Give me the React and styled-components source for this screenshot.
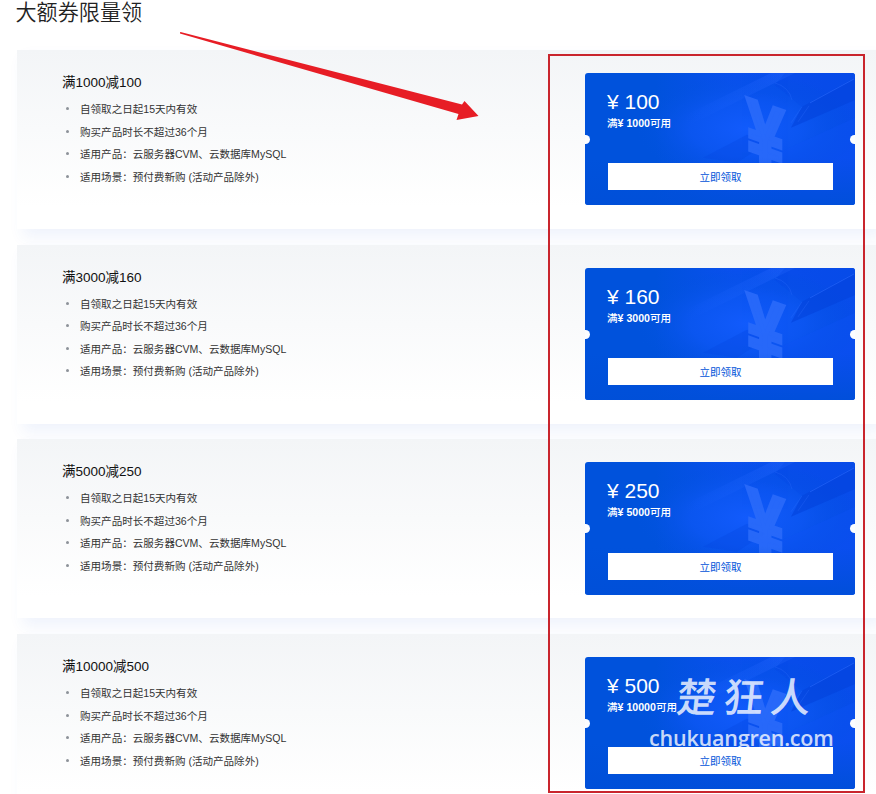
import React from 'react';
import styled, { createGlobalStyle } from "styled-components";

const coupons = [
  { full: 1000, minus: 100 },
  { full: 3000, minus: 160 },
  { full: 5000, minus: 250 },
  { full: 10000, minus: 500 },
];

const rules = [
  "自领取之日起15天内有效",
  "购买产品时长不超过36个月",
  "适用产品：云服务器CVM、云数据库MySQL",
  "适用场景：预付费新购 (活动产品除外)",
];

function CouponArt() {
  return (
    <Art viewBox="0 0 270 133" preserveAspectRatio="none" aria-hidden="true">
      <defs>
        <radialGradient id="glow" cx="0.6" cy="0.42" r="0.42">
          <stop offset="0" stopColor="#125bfc" />
          <stop offset="0.5" stopColor="#0c57f2" stopOpacity="0.8" />
          <stop offset="1" stopColor="#0052dc" stopOpacity="0" />
        </radialGradient>
        <linearGradient id="beam" gradientUnits="userSpaceOnUse" x1="100" y1="48" x2="200" y2="0">
          <stop offset="0" stopColor="#1a62ff" stopOpacity="0" />
          <stop offset="1" stopColor="#2a6cff" stopOpacity="0.35" />
        </linearGradient>
        <linearGradient id="side" x1="0" y1="0" x2="1" y2="0">
          <stop offset="0" stopColor="#0a50ee" stopOpacity="0" />
          <stop offset="0.4" stopColor="#0a50ee" />
          <stop offset="1" stopColor="#084cea" />
        </linearGradient>
        <linearGradient id="shade" x1="0" y1="0" x2="0" y2="1">
          <stop offset="0" stopColor="#004fd8" stopOpacity="0" />
          <stop offset="1" stopColor="#004fd8" stopOpacity="0.9" />
        </linearGradient>
      </defs>
      <rect x="70" width="200" height="133" fill="url(#side)" />
      <rect width="270" height="133" fill="url(#glow)" />
      <path d="M85 50 L186 0 H210 L105 52Z" fill="url(#beam)" />
      <path d="M200 0 H270 V5 L217 34 L190 12Z" fill="#0648e4" opacity="0.3" />
      <path d="M217 34 L270 5 V27 L206 55Z" fill="#0343dc" opacity="0.6" />
      <path d="M225 30 L269 6" stroke="#2c6cff" strokeWidth="0.8" opacity="0.7" />
      <path d="M190 10 Q204 14 207 27 M217 34 L206 50 M224 33 L213 49" stroke="#3472ff" strokeWidth="0.7" fill="none" opacity="0.4" />
      <path d="M118 85 L162 62 L180 72 L152 90Z" fill="#0749e2" opacity="0.35" />
      <path d="M185 84 L270 45 V133 H185Z" fill="#0d54f5" opacity="0.35" />
      <text transform="matrix(1.06 .38 0 1.42 162 86)" fontFamily="Liberation Sans" fontWeight="700" fontSize="62" fill="#2b6bfa" stroke="#2b6bfa" strokeWidth="3.500" opacity="0.9">¥</text>
      <rect y="85" width="270" height="48" fill="url(#shade)" />
    </Art>
  );
}

function Coupon({ full, minus }) {
  return (
    <Ticket>
      <CouponArt />
      <Price>¥ {minus}</Price>
      <Limit><span>满</span>¥ {full}<span>可用</span></Limit>
      <Receive>立即领取</Receive>
      <Notch />
      <Notch $right />
    </Ticket>
  );
}

export default function App() {
  return (
    <Page>
      <GlobalStyle />
      <Heading>大额券限量领</Heading>
      <List>
        {coupons.map((c) => (
          <Card key={c.full}>
            <Info>
              <h3>满{c.full}减{c.minus}</h3>
              <ul>
                {rules.map((rule) => <li key={rule}>{rule}</li>)}
              </ul>
            </Info>
            <Coupon {...c} />
          </Card>
        ))}
      </List>
      <Watermark>
        <div className="name"><span>楚</span><span>狂</span><span>人</span></div>
        <div className="site">chukuangren.com</div>
      </Watermark>
      <Frame />
      <Arrow viewBox="0 0 300 90">
        <path d="M0 .5 L.5 0 L282 72.5 L284.500 69 L298.500 84 L276.500 88 L278.500 82 L0 1.500Z" fill="#e71d25" />
      </Arrow>
    </Page>
  );
}

const GlobalStyle = createGlobalStyle`
    * {
        box-sizing: border-box;
        margin: 0;
        padding: 0;
    }
    body {
        background: #fff;
        overflow: hidden;
        font-family: "Liberation Sans", "Noto Sans CJK SC", sans-serif;
    }
`;

const Page = styled.div`
    position: relative;
    width: 876px;
    height: 794px;
    overflow: hidden;
`;

const Heading = styled.h1`
    height: 50px;
    padding-left: 15.500px;
    font-size: 21.1px;
    line-height: 25px;
    font-weight: 350;
    color: #222;
`;

const List = styled.div`
    display: flex;
    flex-direction: column;
    gap: 15.700px;
    padding-left: 17px;
`;

const Card = styled.section`
    display: flex;
    flex: none;
    justify-content: space-between;
    align-items: flex-start;
    height: 179px;
    padding: 22.900px 21px 0 45px;
    background: linear-gradient(#f3f5f7, #fff 88%);
    box-shadow: 6px 8px 14px rgba(55, 99, 220, 0.08);
`;

const Info = styled.div`
    color: #111;
    h3 {
        font-size: 13.5px;
        line-height: 19px;
        font-weight: 400;
    }
    ul {
        margin-top: 5.400px;
        list-style: none;
    }
    li {
        display: flex;
        align-items: center;
        height: 22.5px;
        font-size: 10.55px;
        white-space: pre;
        color: #333;
    }
    li::before {
        content: "";
        width: 3px;
        height: 3px;
        margin: 0 11px 0 4px;
        border-radius: 50%;
        background: #8d9299;
    }
`;

const Ticket = styled.div`
    position: relative;
    width: 270px;
    height: 132.500px;
    padding: 17px 22px 0 23px;
    border-radius: 3px;
    overflow: hidden;
    background: #0052dc;
    color: #fff;
`;

const Art = styled.svg`
    position: absolute;
    inset: 0;
    width: 100%;
    height: 100%;
`;

const Price = styled.div`
    position: relative;
    margin-left: -1px;
    font-size: 21px;
    line-height: 24px;
`;

const Limit = styled.div`
    position: relative;
    height: 18px;
    margin-left: -1px;
    font-size: 10.6px;
    line-height: 18px;
    font-weight: 700;
    span {
        font-weight: 500;
    }
`;

const Receive = styled.button`
    position: relative;
    display: block;
    width: 225px;
    height: 27px;
    margin-top: 31.400px;
    border: 0;
    background: #fff;
    color: #0052d9;
    font-family: inherit;
    font-size: 10.5px;
`;

const Notch = styled.i`
    position: absolute;
    top: 62px;
    ${(props) => (props.$right ? "right: -4px;" : "left: -4px;")}
    width: 9px;
    height: 9px;
    border-radius: 50%;
    background: #fcfdff;
`;

const Watermark = styled.div`
    position: absolute;
    left: 649px;
    top: 670px;
    color: rgba(255, 255, 255, 0.8);
    .name {
        display: flex;
        gap: 7px;
        height: 51px;
        padding-left: 28px;
        font-family: "Noto Sans CJK SC", sans-serif;
        font-size: 40px;
        line-height: 50px;
        font-weight: 500;
        transform: skewX(-6deg);
    }
    .site {
        font-family: "Open Sans", sans-serif;
        font-size: 21.5px;
        line-height: 34px;
        font-weight: 600;
        letter-spacing: -0.2px;
    }
`;

const Frame = styled.div`
    position: absolute;
    left: 548px;
    top: 54px;
    width: 317px;
    height: 739px;
    border: 2px solid #c9252d;
`;

const Arrow = styled.svg`
    position: absolute;
    left: 180px;
    top: 32px;
    width: 300px;
    height: 90px;
`;
